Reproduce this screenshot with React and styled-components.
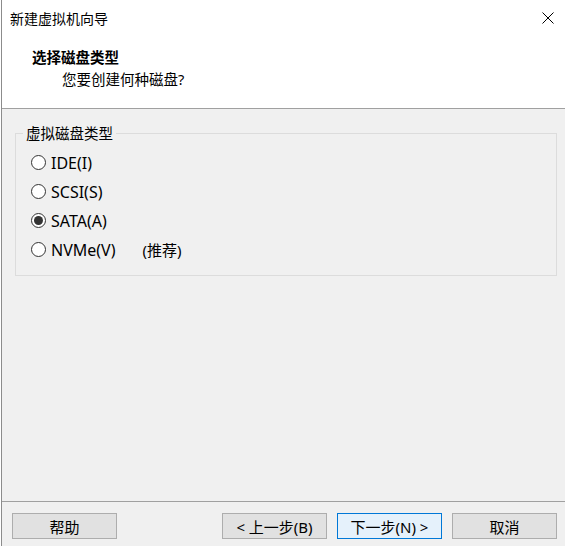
import React from "react";
import styled, { createGlobalStyle } from "styled-components";

const GlobalStyle = createGlobalStyle`
  html, body {
    margin: 0;
    padding: 0;
    background: #ffffff;
  }
  body {
    font-family: "Noto Sans", "Noto Sans CJK SC", sans-serif;
    color: #000;
  }
`;

const Window = styled.div`
  display: flex;
  flex-direction: column;
  width: 564px;
  height: 546px;
  margin-left: 1px;
  border-left: 1px solid #8c8c8c;
  box-sizing: border-box;
  font-size: 15px;
`;

const TitleBar = styled.div`
  display: flex;
  align-items: center;
  justify-content: space-between;
  height: 36px;
  padding-left: 8px;
  background: #fff;
  font-size: 14px;
`;

const CloseButton = styled.div`
  display: flex;
  align-items: center;
  justify-content: center;
  width: 46px;
  height: 36px;
  margin-right: -6px;
`;

const Header = styled.div`
  height: 73px;
  padding-top: 11px;
  box-sizing: border-box;
  background: #fff;
  border-bottom: 1px solid #a0a0a0;
`;

const HeaderTitle = styled.div`
  margin-left: 30px;
  line-height: 20px;
  font-size: 14.5px;
  font-weight: bold;
`;

const HeaderSub = styled.div`
  margin-left: 60px;
  margin-top: 2px;
  line-height: 20px;
  font-size: 14.5px;
`;

const Body = styled.div`
  flex: 1;
  background: #f0f0f0;
  padding: 14px 8px 0 13px;
`;

const Group = styled.fieldset`
  margin: 0;
  padding: 5px 0 11px 15px;
  border: 1px solid #dcdcdc;
  min-width: 0;
`;

const Legend = styled.legend`
  margin-left: -8px;
  padding: 0 3px;
  line-height: 20px;
  font-size: 14.5px;
`;

const RadioRow = styled.label`
  display: flex;
  align-items: center;
  height: 29px;
  gap: 5px;
  font-size: 16px;
`;

const RadioCircle = styled.span`
  position: relative;
  width: 15px;
  height: 15px;
  box-sizing: border-box;
  border: 1px solid #333;
  border-radius: 50%;
  background: #fff;

  &::after {
    content: "";
    display: ${(p) => (p.checked ? "block" : "none")};
    position: absolute;
    left: 2px;
    top: 2px;
    width: 9px;
    height: 9px;
    border-radius: 50%;
    background: #333;
  }
`;

const Note = styled.span`
  margin-left: ${(p) => p.offset}px;
  font-size: 15px;
`;

const Footer = styled.div`
  display: flex;
  align-items: flex-start;
  height: 45px;
  padding: 11px 8px 0 10px;
  box-sizing: border-box;
  background: #f0f0f0;
  border-top: 1px solid #a0a0a0;
`;

const Button = styled.div`
  display: flex;
  align-items: center;
  justify-content: center;
  width: 105px;
  height: 26px;
  box-sizing: border-box;
  margin-left: ${(p) => p.gap || 0}px;
  background: ${(p) => (p.primary ? "#e5f1fb" : "#e1e1e1")};
  border: 1px solid ${(p) => (p.primary ? "#0078d7" : "#adadad")};
  font-size: 15px;
`;

const Spacer = styled.div`
  flex: 1;
`;

const options = [
  { label: "IDE(I)" },
  { label: "SCSI(S)" },
  { label: "SATA(A)", checked: true },
  { label: "NVMe(V)", note: "(推荐)" },
];

export default function App() {
  return (
    <>
      <GlobalStyle />
      <Window>
        <TitleBar>
          <span>新建虚拟机向导</span>
          <CloseButton>
            <svg width="12" height="12" viewBox="0 0 12 12">
              <path d="M0.5 0.5 L11.5 11.5 M11.5 0.5 L0.5 11.5" stroke="#000" strokeWidth="1" fill="none" />
            </svg>
          </CloseButton>
        </TitleBar>
        <Header>
          <HeaderTitle>选择磁盘类型</HeaderTitle>
          <HeaderSub>您要创建何种磁盘?</HeaderSub>
        </Header>
        <Body>
          <Group>
            <Legend>虚拟磁盘类型</Legend>
            {options.map((o) => (
              <RadioRow key={o.label}>
                <RadioCircle checked={o.checked} />
                <span>{o.label}</span>
                {o.note && <Note offset={22}>{o.note}</Note>}
              </RadioRow>
            ))}
          </Group>
        </Body>
        <Footer>
          <Button>帮助</Button>
          <Spacer />
          <Button>&lt; 上一步(B)</Button>
          <Button primary gap={10}>下一步(N) &gt;</Button>
          <Button gap={10}>取消</Button>
        </Footer>
      </Window>
    </>
  );
}
